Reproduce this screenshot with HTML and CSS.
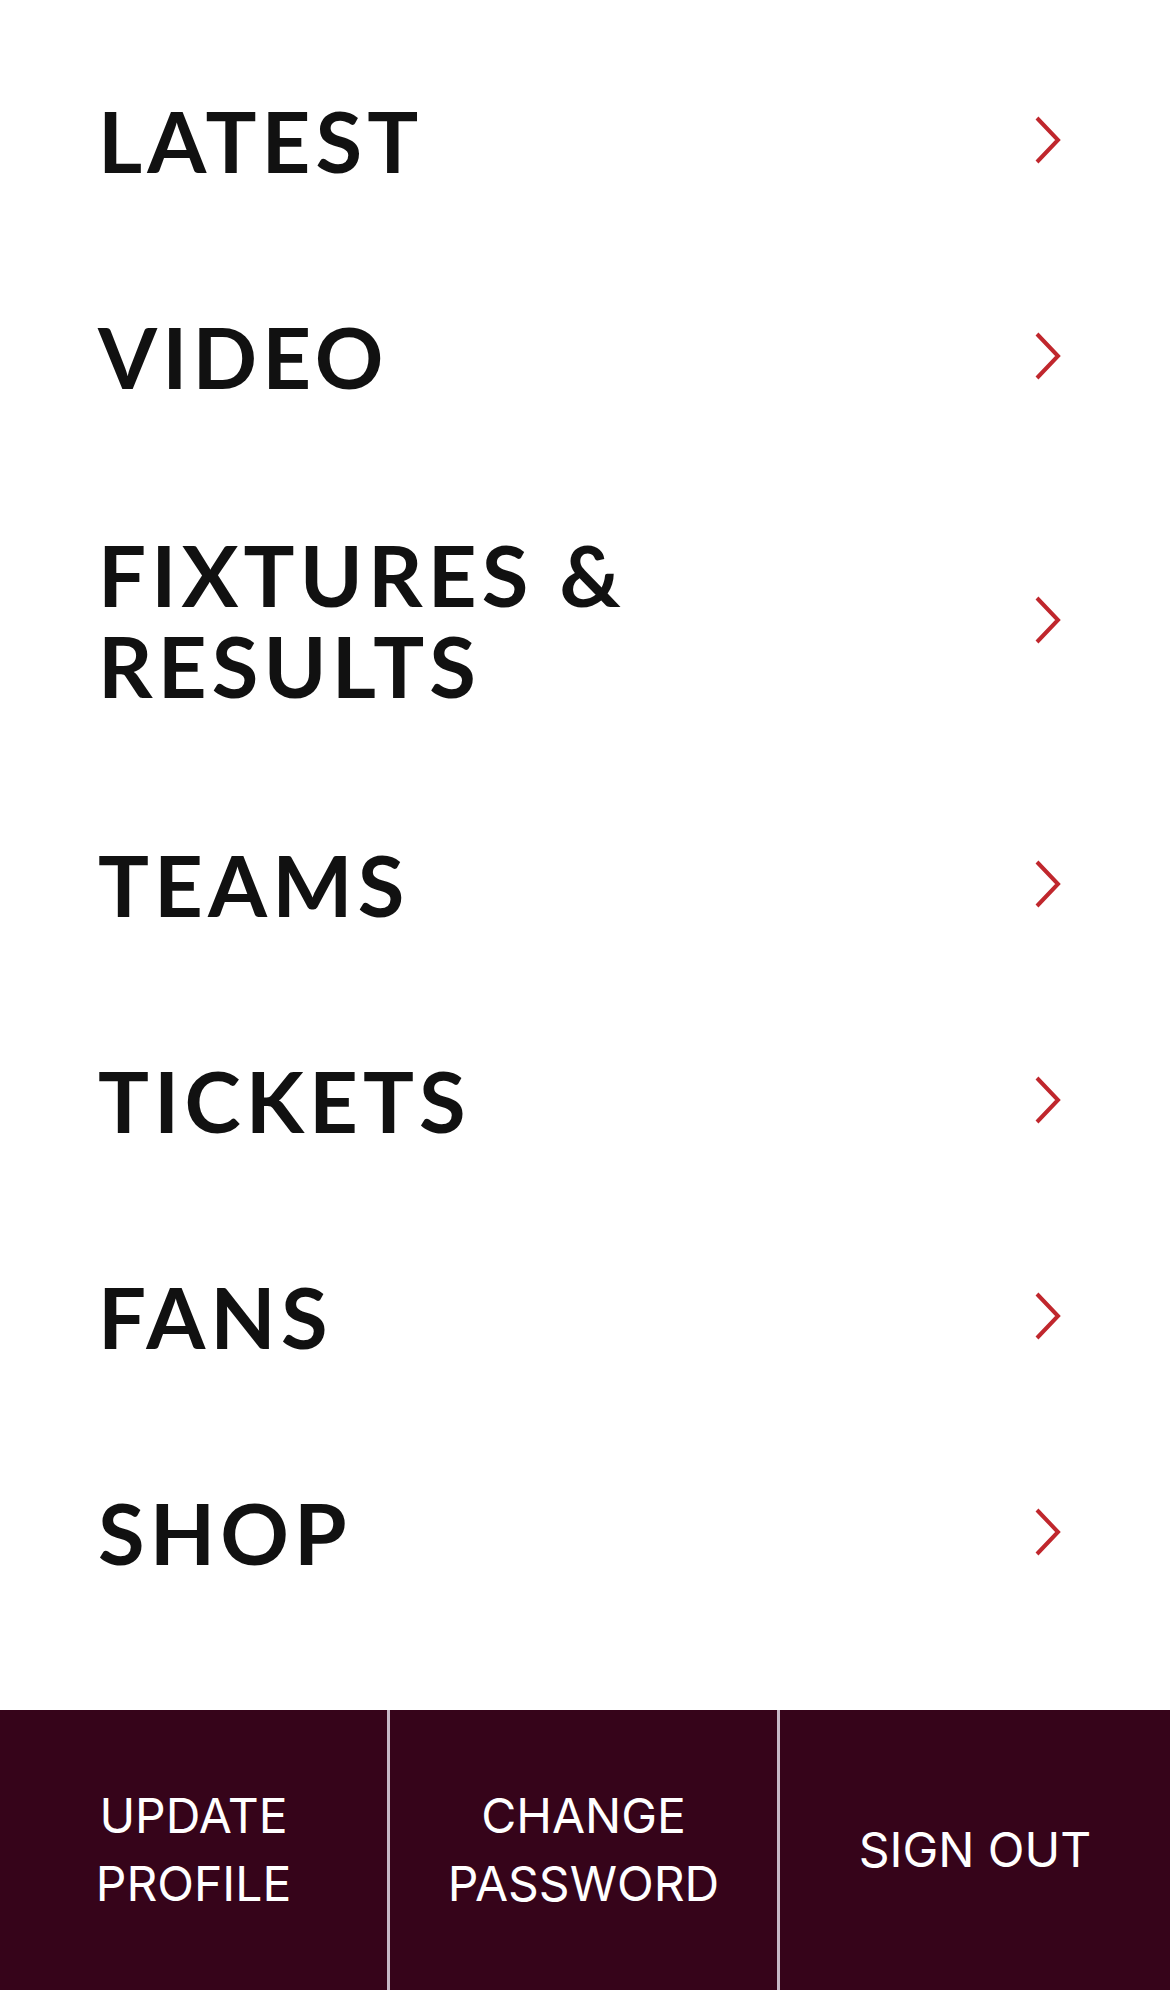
FILE: index.html
```html
<!DOCTYPE html>
<html lang="en">
<head>
<meta charset="utf-8">
<title>Menu</title>
<link rel="stylesheet" href="styles.css">
</head>
<body>
<div class="page">
  <nav class="menu">
    <a class="item" href="#"><span class="label">LATEST</span><svg class="chev" viewBox="0 0 26 48"><path d="M2 2 L23 24 L2 46"/></svg></a>
    <a class="item" href="#"><span class="label">VIDEO</span><svg class="chev" viewBox="0 0 26 48"><path d="M2 2 L23 24 L2 46"/></svg></a>
    <a class="item item--double" href="#"><span class="label">FIXTURES &amp;<br>RESULTS</span><svg class="chev" viewBox="0 0 26 48"><path d="M2 2 L23 24 L2 46"/></svg></a>
    <a class="item" href="#"><span class="label">TEAMS</span><svg class="chev" viewBox="0 0 26 48"><path d="M2 2 L23 24 L2 46"/></svg></a>
    <a class="item" href="#"><span class="label">TICKETS</span><svg class="chev" viewBox="0 0 26 48"><path d="M2 2 L23 24 L2 46"/></svg></a>
    <a class="item" href="#"><span class="label">FANS</span><svg class="chev" viewBox="0 0 26 48"><path d="M2 2 L23 24 L2 46"/></svg></a>
    <a class="item" href="#"><span class="label">SHOP</span><svg class="chev" viewBox="0 0 26 48"><path d="M2 2 L23 24 L2 46"/></svg></a>
  </nav>
  <div class="account">
    <a class="acc-btn" href="#">UPDATE<br>PROFILE</a>
    <a class="acc-btn" href="#">CHANGE<br>PASSWORD</a>
    <a class="acc-btn" href="#">SIGN OUT</a>
  </div>
</div>
</body>
</html>
```

FILE: styles.css
```css
html, body {
  margin: 0;
  padding: 0;
  background: #ffffff;
}

.page {
  width: 1170px;
  height: 1990px;
  overflow: hidden;
  display: flex;
  flex-direction: column;
}

.menu {
  display: flex;
  flex-direction: column;
  padding-top: 32px;
}

.item {
  display: flex;
  align-items: center;
  justify-content: space-between;
  height: 216px;
  box-sizing: border-box;
  padding: 0 109px 0 98px;
  text-decoration: none;
  color: #111111;
}

.item--double {
  height: 312px;
}

.label {
  font-family: "Lato", "Open Sans", sans-serif;
  font-weight: 700;
  font-size: 85px;
  line-height: 91px;
  letter-spacing: 0.06em;
}

.chev {
  width: 26px;
  height: 48px;
  flex: none;
}

.chev path {
  fill: none;
  stroke: #c0272d;
  stroke-width: 4;
}

.account {
  margin-top: 70px;
  height: 280px;
  background: #36041a;
  display: grid;
  grid-template-columns: 1fr 1fr 1fr;
  flex: none;
}

.acc-btn {
  display: flex;
  align-items: center;
  justify-content: center;
  text-align: center;
  color: #ffffff;
  text-decoration: none;
  font-family: "Inter", "Roboto", sans-serif;
  font-size: 48px;
  line-height: 68px;
  letter-spacing: 0;
  border-right: 3px solid #c6b9c6;
}

.acc-btn:last-child {
  border-right: none;
}
```
